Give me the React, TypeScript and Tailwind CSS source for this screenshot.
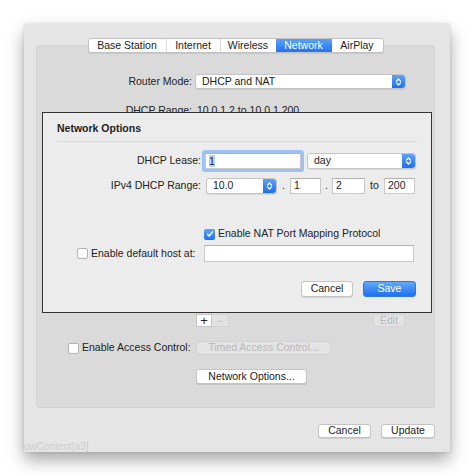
import React from "react";

const FONT = "font-['Liberation_Sans',Arial,sans-serif]";

// Blue up/down end cap used by the popup buttons.
function Chevrons() {
  return (
    <svg width="7" height="10" viewBox="0 0 7 10" fill="none">
      <path d="M1.5 4 L3.5 2 L5.5 4" stroke="white" strokeWidth="1.2" strokeLinecap="round" strokeLinejoin="round" />
      <path d="M1.5 6 L3.5 8 L5.5 6" stroke="white" strokeWidth="1.2" strokeLinecap="round" strokeLinejoin="round" />
    </svg>
  );
}

function Popup({ value, className }: { value: string; className: string }) {
  return (
    <div
      className={`flex items-stretch rounded-[3px] border border-[#c4c4c4] bg-white shadow-[0_1px_0_rgba(0,0,0,0.08)] ${className}`}
    >
      <span className="flex flex-1 items-center pl-[6px] text-[10.5px] text-[#222]">{value}</span>
      <span className="flex w-[13px] items-center justify-center rounded-r-[3px] bg-gradient-to-b from-[#5aa2fa] to-[#1f6fe9]">
        <Chevrons />
      </span>
    </div>
  );
}

function Field({ children, className }: { children?: React.ReactNode; className: string }) {
  return (
    <div
      className={`flex items-center border border-[#c8c8c8] border-t-[#b3b3b3] bg-white pl-[3px] text-[10.5px] text-[#222] ${className}`}
    >
      {children}
    </div>
  );
}

function Checkbox({ checked = false }: { checked?: boolean }) {
  if (checked) {
    return (
      <span className="flex h-[11px] w-[11px] shrink-0 items-center justify-center rounded-[2px] bg-gradient-to-b from-[#5aa2fa] to-[#1f6fe9]">
        <svg width="8" height="8" viewBox="0 0 8 8" fill="none">
          <path d="M1.5 4.2 L3.2 6 L6.6 1.8" stroke="white" strokeWidth="1.4" strokeLinecap="round" strokeLinejoin="round" />
        </svg>
      </span>
    );
  }
  return <span className="h-[11px] w-[11px] shrink-0 rounded-[2px] border border-[#b4b4b4] bg-white" />;
}

function Button({
  label,
  className,
  primary = false,
  disabled = false,
}: {
  label: string;
  className: string;
  primary?: boolean;
  disabled?: boolean;
}) {
  const tone = primary
    ? "bg-gradient-to-b from-[#62a8fb] to-[#1e6ff0] text-white border-[#2a78ee]"
    : disabled
      ? "bg-[#e3e3e3] text-[#b9b9b9] border-[#d3d3d3]"
      : "bg-white text-[#222] border-[#c4c4c4] shadow-[0_1px_0_rgba(0,0,0,0.1)]";
  return (
    <div
      className={`flex items-center justify-center rounded-[3px] border text-[10.5px] ${tone} ${className}`}
    >
      {label}
    </div>
  );
}

const TABS = [
  { label: "Base Station", w: "w-[77px]" },
  { label: "Internet", w: "w-[54px]" },
  { label: "Wireless", w: "w-[56px]" },
  { label: "Network", w: "w-[56px]", active: true },
  { label: "AirPlay", w: "w-[51px]" },
];

function Tabs() {
  return (
    <div className="flex h-[15px] self-center overflow-hidden rounded-[3px] border border-[#c2c2c2] bg-white shadow-[0_1px_0_rgba(0,0,0,0.08)]">
      {TABS.map((t, i) => (
        <div
          key={t.label}
          className={`flex items-center justify-center text-[10.5px] ${t.w} ${
            t.active
              ? "bg-gradient-to-b from-[#5aa2fa] to-[#2273ee] text-white"
              : "text-[#222]"
          } ${i > 0 && !t.active && !TABS[i - 1].active ? "border-l border-[#dcdcdc]" : ""}`}
        >
          {t.label}
        </div>
      ))}
    </div>
  );
}

function NetworkOptionsSheet() {
  return (
    <div className="absolute left-[18px] top-[88px] flex h-[201px] w-[390px] flex-col border-[1.5px] border-[#333] bg-[#ececec] pt-[9px]">
      <div className="px-[14px] text-[10.5px] font-bold leading-[13px] text-[#222]">Network Options</div>
      <div className="mx-[14px] mt-[6px] h-px bg-[#dadada]" />

      <div className="mt-[11px] flex h-[16px] items-center">
        <span className="w-[158px] text-right text-[10.5px] text-[#222]">DHCP Lease:</span>
        <Field className="ml-[4px] h-[16px] w-[96px] rounded-[1px] ring-[3px] ring-[#9cc2f4]">
          <span className="bg-[#b5d3f7] leading-[12px]">1</span>
        </Field>
        <Popup value="day" className="ml-[6px] h-[16px] w-[109px]" />
      </div>

      <div className="mt-[9px] flex h-[16px] items-center text-[10.5px] text-[#222]">
        <span className="w-[158px] text-right">IPv4 DHCP Range:</span>
        <Popup value="10.0" className="ml-[5px] h-[16px] w-[71px]" />
        <span className="w-[13px] text-center">.</span>
        <Field className="h-[16px] w-[31px]">1</Field>
        <span className="w-[11px] text-center">.</span>
        <Field className="h-[16px] w-[33px]">2</Field>
        <span className="w-[19px] text-center">to</span>
        <Field className="h-[16px] w-[31px]">200</Field>
      </div>

      <div className="mt-[34px] flex h-[12px] items-center gap-[3px] pl-[161px] text-[10.5px] text-[#222]">
        <Checkbox checked />
        <span>Enable NAT Port Mapping Protocol</span>
      </div>

      <div className="mt-[5px] flex h-[17px] items-center text-[10.5px] text-[#222]">
        <div className="flex w-[161px] items-center gap-[3px] pl-[34px]">
          <Checkbox />
          <span>Enable default host at:</span>
        </div>
        <Field className="h-[17px] w-[210px]" />
      </div>

      <div className="mt-[19px] flex h-[16px] justify-end gap-[10px] pr-[15px]">
        <Button label="Cancel" className="h-[16px] w-[52px]" />
        <Button label="Save" primary className="h-[16px] w-[53px]" />
      </div>
    </div>
  );
}

export default function App() {
  return (
    <div className={`h-[476px] w-[474px] bg-white pl-[24px] pt-[24px] ${FONT}`}>
      <div className="relative flex h-[428px] w-[426px] flex-col bg-[#e5e5e5] pl-[12px] pr-[15px] pt-[21px] shadow-[0_8px_16px_rgba(0,0,0,0.35),0_0_3px_rgba(0,0,0,0.12)]">
        <div className="flex h-[363px] shrink-0 flex-col rounded-[3px] border border-[#d3d3d3] bg-[#dadada] text-[10.5px] text-[#222]">
          <div className="-mt-[8px] flex justify-center">
            <Tabs />
          </div>

          <div className="mt-[21px] flex h-[15px] items-center">
            <span className="w-[155px] text-right">Router Mode:</span>
            <Popup value="DHCP and NAT" className="ml-[3px] h-[15px] w-[211px]" />
          </div>

          <div className="mt-[16px] flex h-[12px] items-center">
            <span className="w-[155px] text-right">DHCP Range:</span>
            <span className="ml-[5px]">10.0.1.2 to 10.0.1.200</span>
          </div>

          <div className="mt-[197px] flex h-[13px] items-center pl-[159px] pr-[29px]">
            <div className="flex h-[13px]">
              <span className="flex w-[16px] items-center justify-center border border-[#c4c4c4] bg-white text-[13px] leading-none">+</span>
              <span className="flex w-[17px] items-center justify-center border border-l-0 border-[#d3d3d3] bg-[#e2e2e2] text-[12px] leading-none text-[#c4c4c4]">−</span>
            </div>
            <Button label="Edit" disabled className="ml-auto h-[13px] w-[32px]" />
          </div>

          <div className="mt-[14px] flex h-[14px] items-center">
            <div className="flex w-[159px] items-center gap-[3px] pl-[31px]">
              <Checkbox />
              <span>Enable Access Control:</span>
            </div>
            <Button label="Timed Access Control..." disabled className="h-[14px] w-[135px]" />
          </div>

          <div className="mt-[14px] flex h-[15px] pl-[159px]">
            <Button label="Network Options..." className="h-[15px] w-[111px]" />
          </div>
        </div>

        <div className="mt-[16px] flex h-[14px] shrink-0 justify-end gap-[10px]">
          <Button label="Cancel" className="h-[14px] w-[53px]" />
          <Button label="Update" className="h-[14px] w-[54px]" />
        </div>

        <div className="-ml-[12px] mt-[4px] shrink-0 text-[10px] leading-[10px] text-[#cdcdcd]">owContent[a3]</div>

        <NetworkOptionsSheet />
      </div>
    </div>
  );
}
